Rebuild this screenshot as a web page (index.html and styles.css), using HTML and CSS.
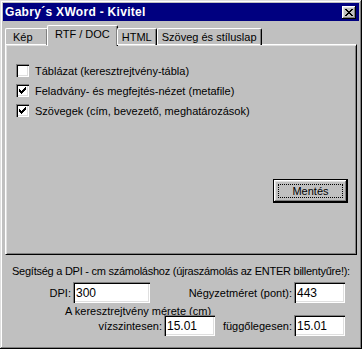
FILE: index.html
```html
<!DOCTYPE html>
<html lang="hu">

<head>
  <meta charset="UTF-8" />
  <title>Gabry´s XWord - Kivitel</title>
  <link rel="stylesheet" href="styles.css">
</head>

<body>
  <div class="window">
    <div class="titlebar">
      <span class="title">Gabry´s XWord - Kivitel</span>
      <div class="close-btn">
        <svg width="8" height="7" viewBox="0 0 8 7" shape-rendering="crispEdges">
          <path d="M0 0h2v1h-2z M6 0h2v1h-2z M1 1h2v1h-2z M5 1h2v1h-2z M2 2h4v1h-4z M3 3h2v1h-2z M2 4h4v1h-4z M1 5h2v1h-2z M5 5h2v1h-2z M0 6h2v1h-2z M6 6h2v1h-2z" fill="#000" />
        </svg>
      </div>
    </div>

    <div class="tabs">
      <div class="tab tab-first">Kép</div>
      <div class="tab tab-active">RTF / DOC</div>
      <div class="tab tab-narrow">HTML</div>
      <div class="tab tab-narrow">Szöveg és stíluslap</div>
    </div>

    <div class="panel">
      <div class="checks">
        <label class="check-row">
          <span class="checkbox"></span>
          <span>Táblázat (keresztrejtvény-tábla)</span>
        </label>
        <label class="check-row">
          <span class="checkbox">
            <svg width="7" height="7" viewBox="0 0 7 7" shape-rendering="crispEdges">
              <path d="M6 0h1v1h-1z M5 1h2v1h-2z M0 2h1v1h-1z M4 2h3v1h-3z M0 3h2v1h-2z M3 3h3v1h-3z M0 4h5v1h-5z M1 5h3v1h-3z M2 6h1v1h-1z" fill="#000" />
            </svg>
          </span>
          <span>Feladvány- és megfejtés-nézet (metafile)</span>
        </label>
        <label class="check-row">
          <span class="checkbox">
            <svg width="7" height="7" viewBox="0 0 7 7" shape-rendering="crispEdges">
              <path d="M6 0h1v1h-1z M5 1h2v1h-2z M0 2h1v1h-1z M4 2h3v1h-3z M0 3h2v1h-2z M3 3h3v1h-3z M0 4h5v1h-5z M1 5h3v1h-3z M2 6h1v1h-1z" fill="#000" />
            </svg>
          </span>
          <span>Szövegek (cím, bevezető, meghatározások)</span>
        </label>
      </div>
      <div class="panel-actions">
        <button class="btn-default"><span class="focus">Mentés</span></button>
      </div>
    </div>

    <div class="calc">
      <div class="calc-help">Segítség a DPI - cm számoláshoz (újraszámolás az ENTER billentyűre!):</div>
      <div class="calc-row">
        <span class="lbl lbl-dpi">DPI:</span>
        <input class="field field-dpi" type="text" value="300" />
        <span class="spacer"></span>
        <span class="lbl">Négyzetméret (pont):</span>
        <input class="field" type="text" value="443" />
      </div>
      <div class="calc-size">A keresztrejtvény mérete (cm)</div>
      <div class="calc-row calc-row-last">
        <span class="lbl lbl-horiz">vízszintesen:</span>
        <input class="field" type="text" value="15.01" />
        <span class="spacer"></span>
        <span class="lbl">függőlegesen:</span>
        <input class="field" type="text" value="15.01" />
      </div>
    </div>
  </div>
</body>

</html>
```

FILE: styles.css
```css
body {
  margin: 0;
  padding: 0;
  background-color: #c0c0c0;
  font-family: "Liberation Sans", Arial, sans-serif;
  font-size: 11px;
  color: #000;
}

.window {
  width: 362px;
  height: 349px;
  box-sizing: border-box;
  padding: 3px;
  background-color: #c0c0c0;
  box-shadow: inset -1px -1px #000, inset 1px 1px #dfdfdf, inset -2px -2px #808080, inset 2px 2px #fff;
  display: flex;
  flex-direction: column;
}

.titlebar {
  height: 18px;
  background-color: #000080;
  display: flex;
  align-items: center;
  justify-content: space-between;
  padding: 0 3px 0 2px;
}

.title {
  color: #fff;
  font-weight: bold;
  font-size: 12px;
  letter-spacing: 0.3px;
}

.close-btn {
  width: 14px;
  height: 13px;
  background-color: #c0c0c0;
  box-shadow: inset -1px -1px #000, inset 1px 1px #fff, inset -2px -2px #808080, inset 2px 2px #dfdfdf;
  display: flex;
  align-items: center;
  justify-content: center;
}

/* tab strip */
.tabs {
  display: flex;
  align-items: flex-end;
  height: 21px;
  margin: 2px 0 0 2px;
  position: relative;
  z-index: 1;
}

.tab {
  height: 17px;
  line-height: 16px;
  padding: 0 6px;
  border-left: 1px solid #fff;
  border-top: 1px solid #fff;
  border-right: 1px solid #000;
  border-radius: 2px 2px 0 0;
  box-shadow: inset -1px 0 #808080;
  box-sizing: border-box;
  margin-bottom: -1px;
}

.tab-first {
  width: 43px;
  padding-left: 7px;
}

.tab-narrow {
  padding: 0 4px;
}

.tab-active {
  height: 21px;
  line-height: 17px;
  margin: 0 -1px -2px -1px;
  padding: 0 7px;
  background-color: #c0c0c0;
}

.panel {
  margin: 0 2px 0 2px;
  height: 211px;
  box-sizing: border-box;
  border-top: 1px solid #fff;
  border-left: 1px solid #fff;
  border-right: 1px solid #000;
  border-bottom: 1px solid #000;
  box-shadow: inset 1px 1px #dfdfdf, inset -1px -1px #808080;
  display: flex;
  flex-direction: column;
  padding: 19px 8px 0 10px;
}

.checks {
  display: flex;
  flex-direction: column;
  gap: 7px;
}

.check-row {
  display: flex;
  align-items: center;
  height: 13px;
  gap: 6px;
}

.checkbox {
  width: 13px;
  height: 13px;
  box-sizing: border-box;
  background-color: #fff;
  box-shadow: inset 1px 1px #808080, inset 2px 2px #000, inset -1px -1px #fff, inset -2px -2px #dfdfdf;
  display: flex;
  align-items: center;
  justify-content: center;
}

.panel-actions {
  display: flex;
  justify-content: flex-end;
  margin-top: 62px;
}

.btn-default {
  width: 75px;
  height: 24px;
  padding: 4px;
  border: 1px solid #000;
  background-color: #c0c0c0;
  box-shadow: inset -1px -1px #000, inset 1px 1px #fff, inset -2px -2px #808080, inset 2px 2px #dfdfdf;
  font-family: "Liberation Sans", Arial, sans-serif;
  font-size: 11px;
  color: #000;
  display: flex;
}

.focus {
  flex: 1;
  border: 1px dotted #000;
  display: flex;
  align-items: center;
  justify-content: center;
}

/* DPI calculator */
.calc {
  padding: 10px 14px 0 9px;
  display: flex;
  flex-direction: column;
}

.calc-help {
  line-height: 13px;
  white-space: nowrap;
  letter-spacing: -0.25px;
}

.calc-row {
  display: flex;
  align-items: center;
  margin-top: 4px;
  height: 21px;
}

.calc-row-last {
  margin-top: -3px;
}

.lbl {
  text-align: right;
  margin-right: 2px;
}

.lbl-dpi {
  width: 59px;
}

.lbl-horiz {
  width: 150px;
}

.spacer {
  flex: 1;
}

.calc-size {
  line-height: 13px;
  margin-top: 2px;
  padding-left: 53px;
}

.field {
  width: 51px;
  height: 21px;
  box-sizing: border-box;
  border: none;
  padding: 2px 3px;
  background-color: #fff;
  box-shadow: inset 1px 1px #808080, inset 2px 2px #000, inset -1px -1px #fff, inset -2px -2px #dfdfdf;
  font-family: "Liberation Sans", Arial, sans-serif;
  font-size: 12px;
  outline: none;
}

.field-dpi {
  width: 77px;
}
```
